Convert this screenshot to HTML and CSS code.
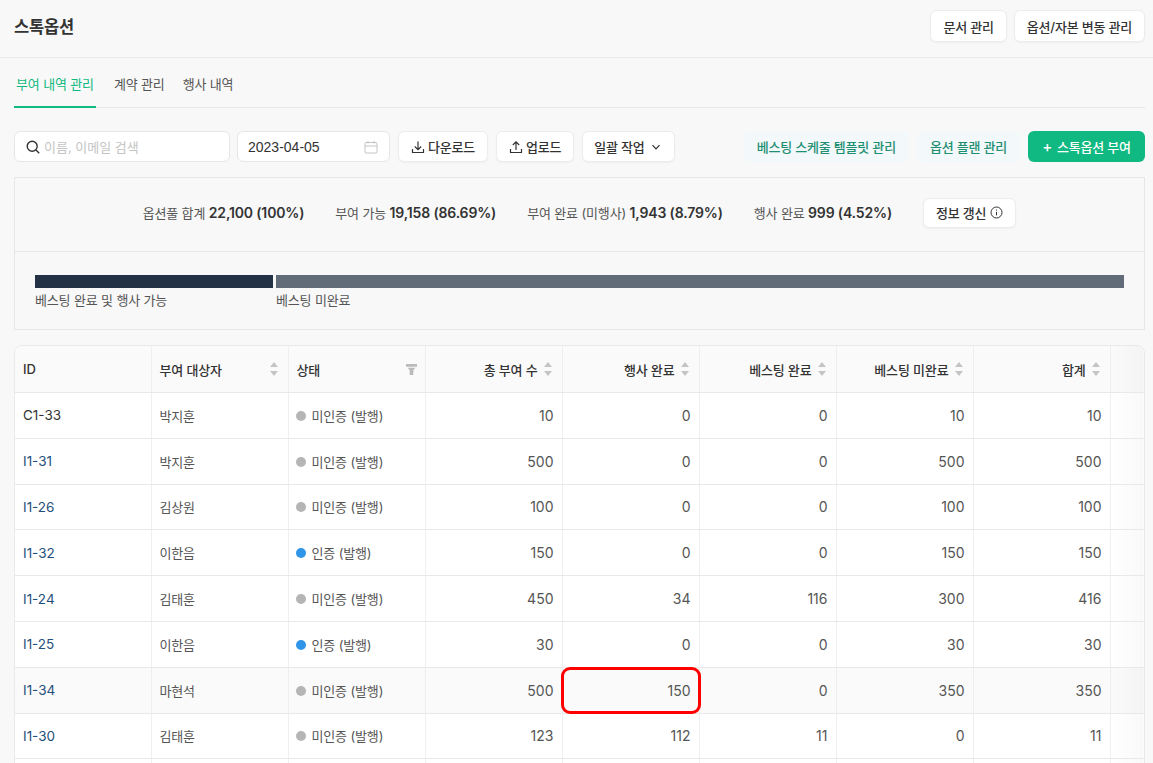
FILE: index.html
```html
<!DOCTYPE html>
<html lang="ko">
<head>
    <meta charset="UTF-8">
    <meta name="viewport" content="width=device-width, initial-scale=1.0">
    <title>스톡옵션</title>
    <link rel="stylesheet" href="styles.css">
</head>
<body>
    <header class="page-header">
        <h1>스톡옵션</h1>
        <div class="header-actions">
            <button class="btn">문서 관리</button>
            <button class="btn">옵션/자본 변동 관리</button>
        </div>
    </header>

    <main class="content">
        <nav class="tabs">
            <a class="tab active">부여 내역 관리</a>
            <a class="tab">계약 관리</a>
            <a class="tab">행사 내역</a>
        </nav>

        <div class="toolbar">
            <label class="field search">
                <svg width="14" height="14" viewBox="0 0 14 14" fill="none" stroke="#333" stroke-width="1.4"><circle cx="6.2" cy="6.2" r="5"/><path d="M9.8 9.8L13.2 13.2"/></svg>
                <span class="placeholder">이름, 이메일 검색</span>
            </label>
            <label class="field date">
                <span>2023-04-05</span>
                <svg width="14" height="14" viewBox="0 0 14 14" fill="none" stroke="#c4c4c4" stroke-width="1"><rect x="1" y="2.5" width="12" height="10.5" rx="1"/><path d="M1 6H13M4 1V3.5M10 1V3.5"/></svg>
            </label>
            <button class="btn btn-tool">
                <svg width="14" height="14" viewBox="0 0 14 14" fill="none" stroke="#333" stroke-width="1.2"><path d="M7 1.5V9.5M3.8 6.5L7 9.7L10.2 6.5M1.5 9V12.5H12.5V9"/></svg>
                다운로드
            </button>
            <button class="btn btn-tool">
                <svg width="14" height="14" viewBox="0 0 14 14" fill="none" stroke="#333" stroke-width="1.2"><path d="M7 10V2M3.8 5L7 1.8L10.2 5M1.5 9V12.5H12.5V9"/></svg>
                업로드
            </button>
            <button class="btn btn-tool btn-menu">
                일괄 작업
                <svg class="chevron" width="10" height="10" viewBox="0 0 10 10" fill="none" stroke="#333" stroke-width="1.2"><path d="M1.5 3.2L5 6.8L8.5 3.2"/></svg>
            </button>
            <div class="toolbar-right">
                <button class="btn-soft">베스팅 스케줄 템플릿 관리</button>
                <button class="btn-soft">옵션 플랜 관리</button>
                <button class="btn-primary"><span class="plus">+</span>스톡옵션 부여</button>
            </div>
        </div>

        <section class="summary">
            <div class="stats">
                <span class="stat">옵션풀 합계 <b>22,100 (100%)</b></span>
                <span class="stat">부여 가능 <b>19,158 (86.69%)</b></span>
                <span class="stat">부여 완료 (미행사) <b>1,943 (8.79%)</b></span>
                <span class="stat">행사 완료 <b>999 (4.52%)</b></span>
                <button class="btn btn-refresh">
                    정보 갱신
                    <svg width="13" height="13" viewBox="0 0 13 13" fill="none" stroke="#333" stroke-width="1"><circle cx="6.5" cy="6.5" r="5.5"/><path d="M6.5 5.8V9.4M6.5 3.6V4.6"/></svg>
                </button>
            </div>
            <div class="vesting">
                <div class="vesting-part part-done">
                    <div class="bar"></div>
                    <span>베스팅 완료 및 행사 가능</span>
                </div>
                <div class="vesting-part part-todo">
                    <div class="bar"></div>
                    <span>베스팅 미완료</span>
                </div>
            </div>
        </section>

        <div class="table-wrap">
            <table>
                <thead>
                    <tr>
                        <th class="col-id">ID</th>
                        <th><div class="th-inner">부여 대상자<i class="sort"></i></div></th>
                        <th><div class="th-inner">상태<svg class="filter" width="11" height="11" viewBox="0 0 12 12"><path d="M0 0H12V3H0ZM2 4H10L8 7V12H4V7Z" fill="#bbb"/></svg></div></th>
                        <th><div class="th-inner num">총 부여 수<i class="sort"></i></div></th>
                        <th><div class="th-inner num">행사 완료<i class="sort"></i></div></th>
                        <th><div class="th-inner num">베스팅 완료<i class="sort"></i></div></th>
                        <th><div class="th-inner num">베스팅 미완료<i class="sort"></i></div></th>
                        <th><div class="th-inner num">합계<i class="sort"></i></div></th>
                        <th class="rest"></th>
                    </tr>
                </thead>
                <tbody>
                    <tr><td class="plain">C1-33</td><td>박지훈</td><td><span class="dot"></span>미인증 (발행)</td><td class="num">10</td><td class="num">0</td><td class="num">0</td><td class="num">10</td><td class="num">10</td><td class="rest"></td></tr>
                    <tr><td class="link">I1-31</td><td>박지훈</td><td><span class="dot"></span>미인증 (발행)</td><td class="num">500</td><td class="num">0</td><td class="num">0</td><td class="num">500</td><td class="num">500</td><td class="rest"></td></tr>
                    <tr><td class="link">I1-26</td><td>김상원</td><td><span class="dot"></span>미인증 (발행)</td><td class="num">100</td><td class="num">0</td><td class="num">0</td><td class="num">100</td><td class="num">100</td><td class="rest"></td></tr>
                    <tr><td class="link">I1-32</td><td>이한음</td><td><span class="dot blue"></span>인증 (발행)</td><td class="num">150</td><td class="num">0</td><td class="num">0</td><td class="num">150</td><td class="num">150</td><td class="rest"></td></tr>
                    <tr><td class="link">I1-24</td><td>김태훈</td><td><span class="dot"></span>미인증 (발행)</td><td class="num">450</td><td class="num">34</td><td class="num">116</td><td class="num">300</td><td class="num">416</td><td class="rest"></td></tr>
                    <tr><td class="link">I1-25</td><td>이한음</td><td><span class="dot blue"></span>인증 (발행)</td><td class="num">30</td><td class="num">0</td><td class="num">0</td><td class="num">30</td><td class="num">30</td><td class="rest"></td></tr>
                    <tr class="hovered"><td class="link">I1-34</td><td>마현석</td><td><span class="dot"></span>미인증 (발행)</td><td class="num">500</td><td class="num marked">150<span class="highlight"></span></td><td class="num">0</td><td class="num">350</td><td class="num">350</td><td class="rest"></td></tr>
                    <tr><td class="link">I1-30</td><td>김태훈</td><td><span class="dot"></span>미인증 (발행)</td><td class="num">123</td><td class="num">112</td><td class="num">11</td><td class="num">0</td><td class="num">11</td><td class="rest"></td></tr>
                    <tr><td></td><td></td><td></td><td></td><td></td><td></td><td></td><td></td><td class="rest"></td></tr>
                </tbody>
            </table>
        </div>
    </main>
</body>
</html>
```

FILE: styles.css
```css
html, body {
    height: 763px;
    overflow: hidden;
}

body {
    margin: 0;
    font-family: Inter, "Noto Sans CJK KR", sans-serif;
    font-size: 13px;
    letter-spacing: -0.15px;
    background-color: #f8f8f8;
    color: #333;
}

button {
    font-family: inherit;
    letter-spacing: -0.2px;
    cursor: pointer;
}

/* Header */
.page-header {
    display: flex;
    align-items: center;
    justify-content: space-between;
    height: 58px;
    padding: 0 8px 5px 14px;
    box-sizing: border-box;
    border-bottom: 1px solid #ebebeb;
}

.page-header h1 {
    margin: 0 0 1px;
    font-size: 16.5px;
    font-weight: 700;
    color: #333;
}

.header-actions {
    display: flex;
    gap: 7px;
}

.btn {
    height: 32px;
    padding: 0 12px;
    border: 1px solid #ececec;
    border-radius: 6px;
    background-color: #fff;
    color: #333;
    font-size: 13px;
    font-weight: 500;
    box-shadow: 0 1px 2px rgba(0, 0, 0, 0.04);
}

/* Tabs */
.content {
    padding: 0 8px 0 14px;
}

.tabs {
    display: flex;
    gap: 18px;
    height: 50px;
    box-sizing: border-box;
    border-bottom: 1px solid #e6e6e6;
}

.tab {
    display: block;
    height: 50px;
    line-height: 53px;
    box-sizing: border-box;
    color: #555;
    font-size: 13px;
}

.tab.active {
    padding: 0 2px;
    color: #10b981;
    border-bottom: 2px solid #10b981;
}

/* Toolbar */
.toolbar {
    display: flex;
    align-items: flex-start;
    gap: 8px;
    height: 32px;
    margin-top: 23px;
}

.field {
    display: flex;
    align-items: center;
    box-sizing: border-box;
    height: 31px;
    border: 1px solid #e6e6e6;
    border-radius: 6px;
    background-color: #fff;
}

.search {
    width: 216px;
    gap: 4px;
    padding-left: 11px;
    margin-right: -1px;
}

.placeholder {
    color: #c4c4c4;
    letter-spacing: 0;
}

.date {
    width: 153px;
    justify-content: space-between;
    padding: 0 11px 0 10px;
    font-family: "Liberation Sans", sans-serif;
    font-size: 14px;
    letter-spacing: 0;
}

.btn-tool {
    display: flex;
    align-items: center;
    justify-content: center;
    gap: 3px;
    height: 31px;
    padding: 0 12px;
}

.btn-menu {
    padding: 0 13px 0 11px;
}

.chevron {
    margin-left: 3px;
}

.toolbar-right {
    display: flex;
    gap: 8px;
    margin-left: auto;
}

.btn-soft {
    height: 31px;
    padding: 0 13px;
    border: none;
    border-radius: 6px;
    background-color: #f3f8fb;
    color: #1f8f72;
    font-size: 13px;
    font-weight: 500;
}

.btn-primary {
    height: 31px;
    width: 117px;
    padding: 0;
    border: none;
    border-radius: 6px;
    background-color: #0fb981;
    color: #fff;
    font-size: 13px;
    font-weight: 500;
}

.plus {
    font-size: 15px;
    margin-right: 5px;
}

/* Summary */
.summary {
    margin-top: 14px;
    border: 1px solid #e6e6e6;
    height: 153px;
    box-sizing: border-box;
}

.stats {
    display: flex;
    align-items: center;
    justify-content: center;
    gap: 31px;
    height: 74px;
    padding-bottom: 4px;
    box-sizing: border-box;
    border-bottom: 1px solid #e6e6e6;
    color: #555;
}

.stat b {
    color: #333;
    font-size: 14px;
    font-weight: 600;
}

.btn-refresh {
    display: flex;
    align-items: center;
    gap: 4px;
    height: 30px;
}

.vesting {
    display: flex;
    gap: 3px;
    padding: 23px 20px 0;
    color: #555;
    font-size: 13px;
}

.part-done {
    width: 238px;
}

.part-todo {
    flex: 1;
}

.bar {
    height: 13px;
    margin-bottom: 2px;
}

.part-done .bar {
    background-color: #243246;
}

.part-todo .bar {
    background-color: #626b78;
}

/* Table */
.table-wrap {
    margin-top: 15px;
    border: 1px solid #e9e9e9;
    border-radius: 8px 8px 0 0;
    background-color: #fff;
    overflow: hidden;
}

table {
    width: 100%;
    table-layout: fixed;
    border-collapse: collapse;
}

th, td {
    width: 137px;
    box-sizing: border-box;
    padding: 0 8px;
    border-right: 1px solid #efefef;
    border-bottom: 1px solid #e9e9e9;
    font-size: 13px;
    text-align: left;
}

th.col-id {
    width: 136px;
}

th {
    height: 46.5px;
    background-color: #fafafa;
    font-weight: 500;
    color: #333;
}

td {
    height: 45.8px;
    color: #555;
}

td:first-child {
    font-size: 13.5px;
    letter-spacing: 0;
}

.th-inner {
    display: flex;
    align-items: center;
    justify-content: space-between;
}

.th-inner.num {
    justify-content: flex-end;
    gap: 6px;
}

.sort {
    display: block;
    position: relative;
    width: 8px;
    height: 14px;
    margin-right: 2px;
}

.sort::before,
.sort::after {
    content: "";
    position: absolute;
    left: 0;
    border-left: 4px solid transparent;
    border-right: 4px solid transparent;
}

.sort::before {
    top: 0;
    border-bottom: 5px solid #c4c4c4;
}

.sort::after {
    bottom: 0;
    border-top: 5px solid #c4c4c4;
}

.num {
    text-align: right;
}

td.num {
    font-size: 14px;
    letter-spacing: 0;
}

.plain {
    color: #333;
}

.link {
    color: #1f4f7a;
}

.dot {
    display: inline-block;
    width: 10px;
    height: 10px;
    margin: 0 6px 0 -1px;
    border-radius: 50%;
    background-color: #b5b5b5;
}

.dot.blue {
    background-color: #2f95e8;
}

.hovered td {
    background-color: #fafafa;
}

th.rest, td.rest {
    width: auto;
    border-right: none;
    background-image: linear-gradient(to right, rgba(0, 0, 0, 0), rgba(0, 0, 0, 0.025));
}

.marked {
    position: relative;
}

.highlight {
    position: absolute;
    left: -2px;
    right: -2px;
    top: -1px;
    bottom: -1px;
    border: 3px solid #f00;
    border-radius: 9px;
}
```
